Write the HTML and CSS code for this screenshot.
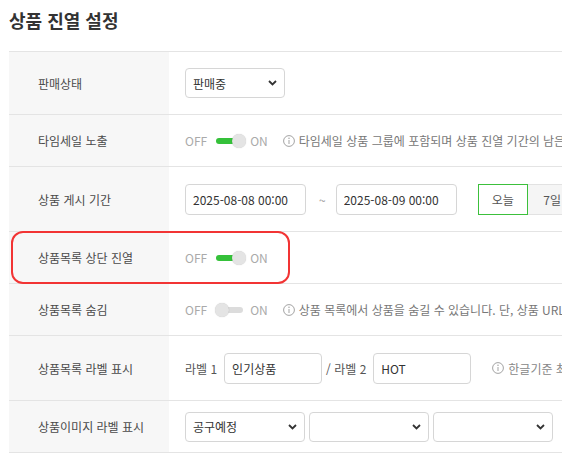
FILE: index.html
```html
<!DOCTYPE html>
<html lang="ko">
<head>
    <meta charset="UTF-8">
    <meta name="viewport" content="width=device-width, initial-scale=1.0">
    <title>상품 진열 설정</title>
    <link rel="stylesheet" href="styles.css">
</head>
<body>
    <div class="page">
        <h2 class="page-title">상품 진열 설정</h2>

        <div class="form-table">
            <div class="form-row row-select">
                <div class="form-label">판매상태</div>
                <div class="form-field">
                    <select class="select select-status">
                        <option>판매중</option>
                        <option>판매중지</option>
                    </select>
                </div>
            </div>

            <div class="form-row">
                <div class="form-label">타임세일 노출</div>
                <div class="form-field">
                    <span class="switch-text">OFF</span>
                    <span class="switch on"></span>
                    <span class="switch-text">ON</span>
                    <span class="help">
                        <svg class="help-icon" viewBox="0 0 12 12"><circle cx="6" cy="6" r="5.4"/><line x1="6" y1="5" x2="6" y2="9"/><circle class="dot" cx="6" cy="3.3" r="0.7"/></svg>
                        타임세일 상품 그룹에 포함되며 상품 진열 기간의 남은 시간이 표시됩니다.
                    </span>
                </div>
            </div>

            <div class="form-row row-input">
                <div class="form-label">상품 게시 기간</div>
                <div class="form-field">
                    <input class="input input-date" type="text" value="2025-08-08 00:00">
                    <span class="range-sep">~</span>
                    <input class="input input-date" type="text" value="2025-08-09 00:00">
                    <div class="period-btns">
                        <button class="period-btn active">오늘</button>
                        <button class="period-btn">7일</button>
                        <button class="period-btn">1개월</button>
                    </div>
                </div>
            </div>

            <div class="form-row">
                <span class="highlight"></span>
                <div class="form-label">상품목록 상단 진열</div>
                <div class="form-field">
                    <span class="switch-text">OFF</span>
                    <span class="switch on"></span>
                    <span class="switch-text">ON</span>
                </div>
            </div>

            <div class="form-row">
                <div class="form-label">상품목록 숨김</div>
                <div class="form-field">
                    <span class="switch-text">OFF</span>
                    <span class="switch"></span>
                    <span class="switch-text">ON</span>
                    <span class="help">
                        <svg class="help-icon" viewBox="0 0 12 12"><circle cx="6" cy="6" r="5.4"/><line x1="6" y1="5" x2="6" y2="9"/><circle class="dot" cx="6" cy="3.3" r="0.7"/></svg>
                        상품 목록에서 상품을 숨길 수 있습니다. 단, 상품 URL로는 접근 가능합니다.
                    </span>
                </div>
            </div>

            <div class="form-row row-input">
                <div class="form-label">상품목록 라벨 표시</div>
                <div class="form-field">
                    <span class="field-text">라벨 1</span>
                    <input class="input input-label" type="text" value="인기상품">
                    <span class="field-text">/ 라벨 2</span>
                    <input class="input input-label" type="text" value="HOT">
                    <span class="help help-wide">
                        <svg class="help-icon" viewBox="0 0 12 12"><circle cx="6" cy="6" r="5.4"/><line x1="6" y1="5" x2="6" y2="9"/><circle class="dot" cx="6" cy="3.3" r="0.7"/></svg>
                        한글기준 최대 4자까지 입력 가능합니다.
                    </span>
                </div>
            </div>

            <div class="form-row">
                <div class="form-label">상품이미지 라벨 표시</div>
                <div class="form-field select-group">
                    <select class="select select-label">
                        <option>공구예정</option>
                    </select>
                    <select class="select select-label">
                        <option></option>
                    </select>
                    <select class="select select-label">
                        <option></option>
                    </select>
                </div>
            </div>
        </div>
    </div>
</body>
</html>
```

FILE: styles.css
```css
html, body {
    overflow: hidden;
}
body {
    margin: 0;
    font-family: "Noto Sans CJK KR", "Noto Sans", sans-serif;
    font-size: 12px;
    color: #333;
    background: #fff;
}
.page {
    padding-left: 9px;
}
.page-title {
    margin: 8px 0 19px;
    font-size: 18px;
    line-height: 24px;
    font-weight: 700;
    color: #333;
}

/* form table */
.form-table {
    width: 760px;
    border-top: 1px solid #e4e4e4;
}
.form-row {
    position: relative;
    display: flex;
    height: 52px;
    border-bottom: 1px solid #e4e4e4;
    box-sizing: border-box;
}
.form-row.row-select {
    height: 63px;
}
.form-row.row-input {
    height: 65px;
}
.form-label {
    width: 160px;
    flex-shrink: 0;
    display: flex;
    align-items: center;
    padding-left: 29px;
    box-sizing: border-box;
    background: #f7f7f7;
    color: #4a4a4a;
}
.form-field {
    display: flex;
    align-items: center;
    padding-left: 16px;
    white-space: nowrap;
}

/* red outline around a row */
.highlight {
    position: absolute;
    left: 2px;
    top: -1px;
    width: 279px;
    height: 53px;
    border: 2.5px solid #f23434;
    border-radius: 12px;
    box-sizing: border-box;
    pointer-events: none;
}

/* inputs */
.input, .select {
    font-family: inherit;
    font-size: 12px;
    color: #333;
    border: 1px solid #d6d6d6;
    border-radius: 4px;
    background-color: #fff;
    box-sizing: border-box;
    outline: none;
}
.input {
    height: 31px;
    padding: 0 7px;
}
.input-date {
    width: 121px;
}
.input-label {
    width: 98px;
}
.select {
    height: 30px;
    padding: 0 22px 0 7px;
    appearance: none;
    -webkit-appearance: none;
    background-image: url("data:image/svg+xml,%3Csvg xmlns='http://www.w3.org/2000/svg' width='9' height='6' viewBox='0 0 9 6'%3E%3Cpath d='M1 1l3.5 3.5L8 1' fill='none' stroke='%23333' stroke-width='1.8'/%3E%3C/svg%3E");
    background-repeat: no-repeat;
    background-position: right 7px center;
}
.select-status {
    width: 100px;
}
.select-label {
    width: 120px;
}
.select-group {
    gap: 4px;
}
.range-sep {
    margin: 0 10px 0 13px;
    color: #999;
}
.field-text {
    color: #555;
    margin-right: 7px;
}
.input-label + .field-text {
    margin-left: 4px;
}

/* period buttons */
.period-btns {
    display: flex;
    margin-left: 21px;
}
.period-btn {
    height: 31px;
    width: 50px;
    font-family: inherit;
    font-size: 12px;
    color: #555;
    border: 1px solid #e2e2e2;
    background: #f5f5f5;
    padding: 0;
}
.period-btn.active {
    border-color: #3cc03c;
    background: #fff;
}
.period-btn + .period-btn {
    border-left: none;
}

/* on / off switch */
.switch-text {
    color: #aaa;
}
.switch {
    position: relative;
    width: 31px;
    height: 14px;
    margin: 0 4px 0 8px;
}
.switch::before {
    content: "";
    position: absolute;
    left: 1px;
    right: 3px;
    top: 4px;
    height: 6px;
    border-radius: 3px;
    background: #dcdcdc;
}
.switch::after {
    content: "";
    position: absolute;
    left: 0;
    top: 0;
    width: 14px;
    height: 14px;
    border-radius: 50%;
    background: #e4e4e4;
    box-shadow: 0 0 1px rgba(0, 0, 0, 0.25);
}
.switch.on::before {
    background: #35c13a;
}
.switch.on::after {
    left: auto;
    right: 0;
}

/* help text */
.help {
    display: flex;
    align-items: center;
    margin-left: 15px;
    color: #777;
}
.help-wide {
    margin-left: 21px;
    color: #888;
}
.help-icon {
    width: 12px;
    height: 12px;
    margin-right: 4px;
    fill: none;
    stroke: #999;
    stroke-width: 0.9;
}
.help-icon .dot {
    fill: #999;
    stroke: none;
}
```
